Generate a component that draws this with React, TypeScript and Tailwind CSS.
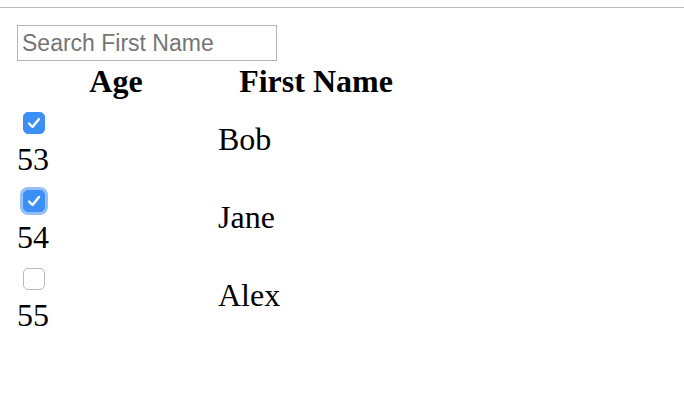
const rows = [
  { age: 53, name: 'Bob', checked: true, focused: false },
  { age: 54, name: 'Jane', checked: true, focused: true },
  { age: 55, name: 'Alex', checked: false, focused: false },
];

const Check = ({ checked, focused }: { checked: boolean; focused: boolean }) => (
  <div
    className={
      'w-[22px] h-[22px] rounded-[5px] flex items-center justify-center ' +
      (checked
        ? 'bg-[#3b8ff6] border border-[#3b8ff6]'
        : 'bg-white border border-[#b9b9b9]') +
      (focused ? ' ring-[3px] ring-[#94c0f7]' : '')
    }
  >
    {checked && (
      <svg width="14" height="12" viewBox="0 0 14 12" fill="none">
        <path
          d="M2 6.5 L5.5 10 L12 2"
          stroke="white"
          strokeWidth="2.4"
          strokeLinecap="round"
          strokeLinejoin="round"
        />
      </svg>
    )}
  </div>
);

const App = () => {
  return (
    <div className="w-[684px] h-[400px] bg-white overflow-hidden">
      <div className="pt-[7px]">
        <div className="h-px bg-[#bdbdbd]" />
      </div>

      <div className="pl-[17px] pt-[17px]">
        <input
          type="text"
          placeholder="Search First Name"
          className="w-[260px] h-[36px] border border-[#b5b5b5] px-[4px] text-[23px] outline-none placeholder:text-[#757575]"
          style={{ fontFamily: '"Liberation Sans", Arial, sans-serif' }}
        />
      </div>

      <div
        className="pl-[16px] text-black text-[32px] leading-[36px]"
        style={{ fontFamily: '"Liberation Serif", "Times New Roman", serif' }}
      >
        <div className="flex h-[46px] pt-[2px] font-bold">
          <div className="w-[200px] text-center">Age</div>
          <div className="w-[200px] text-center">First Name</div>
        </div>

        {rows.map((r) => (
          <div key={r.age} className="flex h-[78px]">
            <div className="w-[201px] pt-[5px]">
              <div className="pl-[7px]">
                <Check checked={r.checked} focused={r.focused} />
              </div>
              <div className="mt-[7px] pl-[1px]">{r.age}</div>
            </div>
            <div className="pt-[14px] pl-[1px]">{r.name}</div>
          </div>
        ))}
      </div>
    </div>
  );
};

export default App;
